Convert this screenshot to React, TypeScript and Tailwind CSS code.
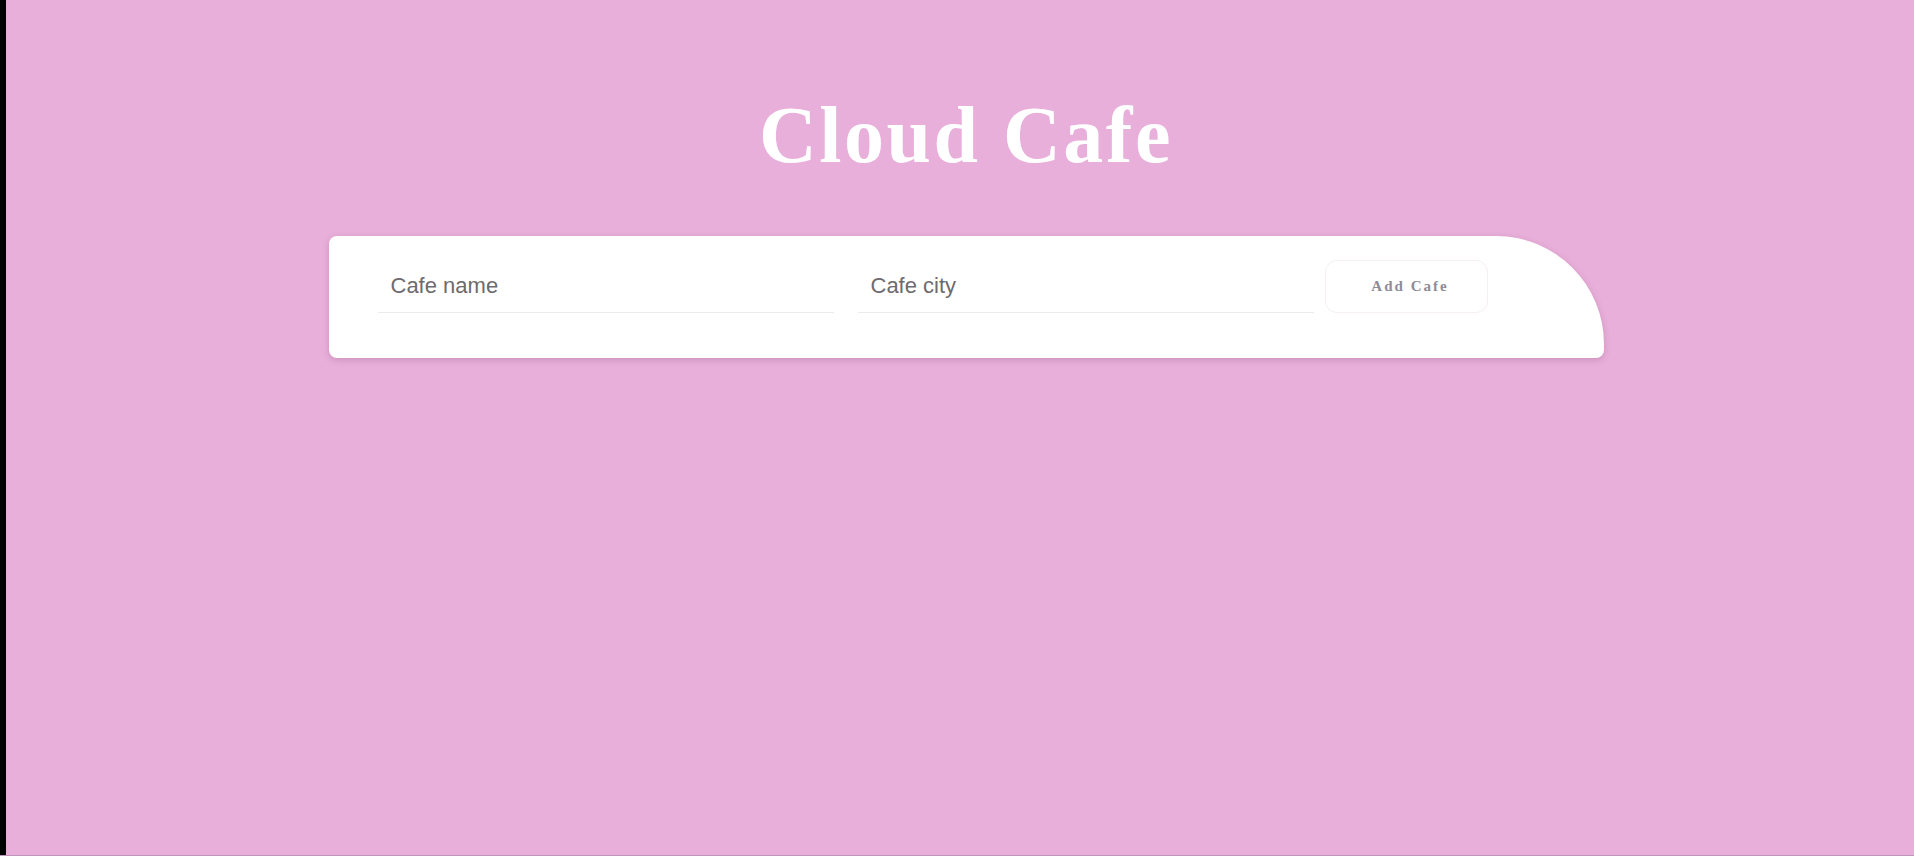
import { useState } from "react";

export default function App() {
  const [name, setName] = useState("");
  const [city, setCity] = useState("");

  return (
    <div className="flex h-screen w-full bg-[#e8afda] border-b border-[#c096b8]">
      {/* window frame edge */}
      <div className="w-[6px] shrink-0 bg-black" />

      <main className="flex flex-1 flex-col items-center pl-[12px] pt-[95px]">
        <h1 className="text-[80px] leading-[80px] font-bold tracking-[2.5px] text-white font-['Liberation_Serif',_'Times_New_Roman',_serif]">
          Cloud Cafe
        </h1>

        {/* Add cafe form */}
        <form
          className="mt-[61px] flex w-[1275px] items-start rounded-lg rounded-tr-[108px] bg-white pt-6 pb-[45px] pl-[49px] shadow-[0_2px_6px_rgba(120,60,100,0.25)]"
          onSubmit={(e) => e.preventDefault()}
        >
          <input
            value={name}
            onChange={(e) => setName(e.target.value)}
            placeholder="Cafe name"
            className="h-[53px] w-[456px] border-b border-[#ebebeb] bg-transparent px-[13px] text-[22px] text-[#555] placeholder:text-[#6e6a6e] outline-none font-['Liberation_Sans',_Arial,_sans-serif]"
          />
          <input
            value={city}
            onChange={(e) => setCity(e.target.value)}
            placeholder="Cafe city"
            className="ml-6 h-[53px] w-[456px] border-b border-[#ebebeb] bg-transparent px-[13px] text-[22px] text-[#555] placeholder:text-[#6e6a6e] outline-none font-['Liberation_Sans',_Arial,_sans-serif]"
          />
          <button
            type="submit"
            className="ml-[11px] h-[53px] w-[163px] rounded-xl border border-[#f6eff3] bg-white pl-[8px] text-[15px] font-bold tracking-[2px] text-[#8c8c99] font-['Liberation_Serif',_'Times_New_Roman',_serif]"
          >
            Add Cafe
          </button>
        </form>
      </main>
    </div>
  );
}
